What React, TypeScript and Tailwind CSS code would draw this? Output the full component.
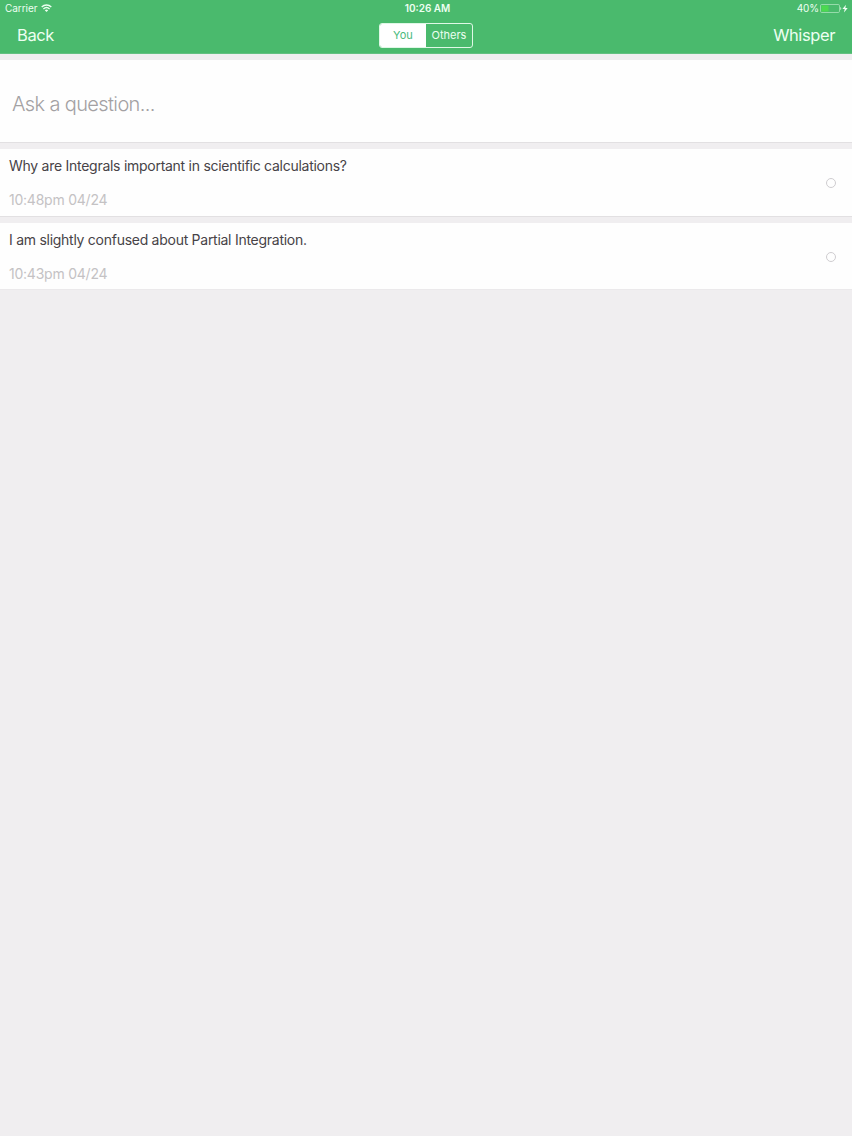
interface Question {
  id: number;
  text: string;
  time: string;
}

const questions: Question[] = [
  {
    id: 1,
    text: "Why are Integrals important in scientific calculations?",
    time: "10:48pm 04/24",
  },
  {
    id: 2,
    text: "I am slightly confused about Partial Integration.",
    time: "10:43pm 04/24",
  },
];

function WifiIcon() {
  return (
    <svg width="11" height="8" viewBox="0 0 11 8" fill="none" stroke="currentColor">
      <path d="M0.7 3C3.4 0.3 7.6 0.3 10.3 3" strokeWidth="1.4" />
      <path d="M2.4 4.9C4.2 3.3 6.8 3.3 8.6 4.9" strokeWidth="1.4" />
      <path d="M5.5 7.9L3.8 6.2C4.8 5.4 6.2 5.4 7.2 6.2Z" fill="currentColor" stroke="none" />
    </svg>
  );
}

function BatteryIcon() {
  return (
    <svg width="28" height="9" viewBox="0 0 28 9" fill="none">
      <rect x="0.5" y="0.5" width="19" height="8" rx="1.3" stroke="#a9e3ba" strokeWidth="0.8" />
      <rect x="1.5" y="1.5" width="7" height="6" fill="#4cd950" />
      <path d="M20.3 3C21.6 3.4 21.6 5.6 20.3 6Z" fill="#d9f5e1" />
      <path d="M26 0.8L22.4 5H24.7L24 8.4L27.7 4.1H25.3Z" fill="#f2fff5" />
    </svg>
  );
}

function StatusBar() {
  return (
    <div className="grid h-4 grid-cols-3 items-center pr-1 pl-[5px] text-[10px] leading-none">
      <div className="flex items-center gap-1">
        <span className="tracking-[-0.05px]">Carrier</span>
        <WifiIcon />
      </div>
      <span className="pl-0.5 text-center text-[10px] font-semibold">10:26 AM</span>
      <div className="flex items-center justify-end gap-px">
        <span className="tracking-[-0.1px]">40%</span>
        <BatteryIcon />
      </div>
    </div>
  );
}

function Header() {
  return (
    <header className="h-[54px] border-b border-[#63c081] bg-[#4aba6d] text-[#edfff1]">
      <StatusBar />
      <nav className="grid h-[38px] grid-cols-3 items-center px-[17px] text-[16.5px]">
        <button className="text-left tracking-[-0.4px]">Back</button>
        <div className="mx-auto flex h-[25px] w-[94px] overflow-hidden rounded-[3px] border border-[#dff8e6] text-[11px]">
          <button className="w-[46px] bg-white text-[#4aba7d]">You</button>
          <button className="flex-1">Others</button>
        </div>
        <button className="text-right tracking-[-0.4px]">Whisper</button>
      </nav>
    </header>
  );
}

function QuestionCard({ question }: { question: Question }) {
  return (
    <li className="flex h-[68px] items-center justify-between border-b border-[#e2e0e2] bg-[#fefefe] pr-4 pl-[9px] last:h-[67px] last:border-[#ebe9eb] last:pt-px">
      <div>
        <p className="text-[14px] leading-5 tracking-[-0.27px] text-[#474347]">{question.text}</p>
        <p className="mt-[14px] text-[14px] leading-5 tracking-[-0.23px] text-[#c4c2c4]">
          {question.time}
        </p>
      </div>
      <span className="h-2.5 w-2.5 rounded-full border border-[#cfcdd0]" />
    </li>
  );
}

export default function App() {
  return (
    <div
      className="min-h-screen bg-[#f0eef0]"
      style={{ fontFamily: "Inter, 'Liberation Sans', sans-serif" }}
    >
      <Header />
      <main className="pt-1.5">
        <input
          className="block h-[83px] w-full border-b border-[#e2e0e2] bg-[#fefefe] px-3 pt-1.5 text-[20px] font-light tracking-[-0.63px] placeholder:text-[#a3a1a3] focus:outline-none"
          placeholder="Ask a question..."
        />
        <ul className="mt-1.5 space-y-1.5">
          {questions.map((question) => (
            <QuestionCard key={question.id} question={question} />
          ))}
        </ul>
      </main>
    </div>
  );
}
